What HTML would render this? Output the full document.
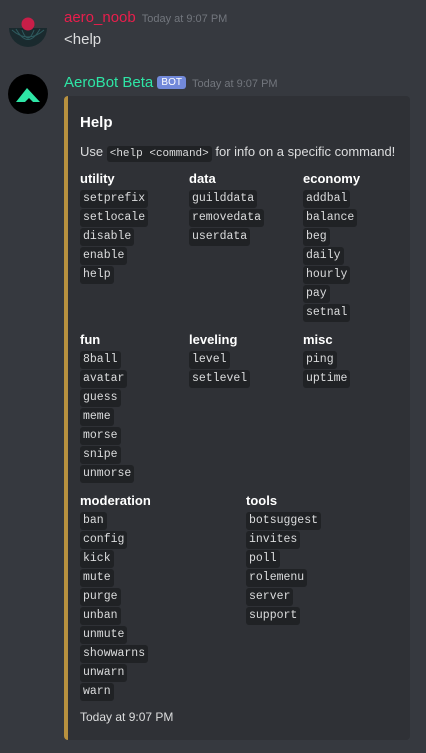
<!DOCTYPE html>
<html><head><meta charset="utf-8"><style>
body{margin:0;width:426px;height:753px;background:#36393f;font-family:"Liberation Sans",sans-serif;position:relative;overflow:hidden}
.a{position:absolute;white-space:nowrap}
.c{position:absolute;font-family:"Liberation Mono",monospace;font-size:11.5px;color:#dcddde;background:#202225;border-radius:3px;padding:0 3px;height:18px;line-height:18px}
.f{position:absolute;font-weight:bold;font-size:13px;color:#fff}
.ts{font-size:11px;color:#72767d;margin-left:6px;font-weight:normal}
</style></head><body>
<svg class="a" style="left:8px;top:10px" width="40" height="40" viewBox="0 0 40 40">
<path d="M1 18 A19 19 0 0 0 39 18 Z" fill="#1a2a2e"/>
<path d="M4 20 Q20 34 36 20 M8 19 Q20 40 32 19 M14 20 Q20 36 26 20" stroke="#2e5a5e" stroke-width="1" fill="none"/>
<circle cx="20" cy="14" r="6.5" fill="#c81e48"/>
</svg>
<div class="a" style="left:64px;top:9px;font-size:15px;color:#e91e4c;font-weight:500">aero_noob<span class="ts">Today at 9:07 PM</span></div>
<div class="a" style="left:64px;top:31px;font-size:15px;color:#dcddde">&lt;help</div>
<svg class="a" style="left:8px;top:74px" width="40" height="40" viewBox="0 0 40 40">
<circle cx="20" cy="20" r="20" fill="#000"/>
<path d="M8 28 L19 14 L32 28 Z M17 28 L21 24 L25 28 Z" fill="#2ee6a6" fill-rule="evenodd"/>
</svg>
<div class="a" style="left:64px;top:74px;font-size:15px;color:#2ee6a6;font-weight:500">AeroBot Beta <span style="background:#7289da;color:#fff;font-size:10px;padding:1px 4px;border-radius:3px;vertical-align:2px">BOT</span><span class="ts">Today at 9:07 PM</span></div>
<div class="a" style="left:64px;top:96px;width:346px;height:644px;background:#2f3136;border-radius:4px;border-left:4px solid #b8913f;box-sizing:border-box"></div>
<div class="a" style="left:80px;top:114px;font-size:15px;font-weight:bold;color:#fff">Help</div>
<div class="a" style="left:80px;top:144px;font-size:13px;color:#dcddde">Use <span style="font-family:'Liberation Mono',monospace;font-size:11px;background:#202225;border-radius:3px;padding:2px 3px">&lt;help &lt;command&gt;</span> for info on a specific command!</div>
<div class="f" style="left:80px;top:171px">utility</div>
<div class="f" style="left:189px;top:171px">data</div>
<div class="f" style="left:303px;top:171px">economy</div>
<div class="c" style="left:80px;top:190px">setprefix</div><div class="c" style="left:80px;top:209px">setlocale</div><div class="c" style="left:80px;top:228px">disable</div><div class="c" style="left:80px;top:247px">enable</div><div class="c" style="left:80px;top:266px">help</div>
<div class="c" style="left:189px;top:190px">guilddata</div><div class="c" style="left:189px;top:209px">removedata</div><div class="c" style="left:189px;top:228px">userdata</div>
<div class="c" style="left:303px;top:190px">addbal</div><div class="c" style="left:303px;top:209px">balance</div><div class="c" style="left:303px;top:228px">beg</div><div class="c" style="left:303px;top:247px">daily</div><div class="c" style="left:303px;top:266px">hourly</div><div class="c" style="left:303px;top:285px">pay</div><div class="c" style="left:303px;top:304px">setnal</div>
<div class="f" style="left:80px;top:332px">fun</div>
<div class="f" style="left:189px;top:332px">leveling</div>
<div class="f" style="left:303px;top:332px">misc</div>
<div class="c" style="left:80px;top:351px">8ball</div><div class="c" style="left:80px;top:370px">avatar</div><div class="c" style="left:80px;top:389px">guess</div><div class="c" style="left:80px;top:408px">meme</div><div class="c" style="left:80px;top:427px">morse</div><div class="c" style="left:80px;top:446px">snipe</div><div class="c" style="left:80px;top:465px">unmorse</div>
<div class="c" style="left:189px;top:351px">level</div><div class="c" style="left:189px;top:370px">setlevel</div>
<div class="c" style="left:303px;top:351px">ping</div><div class="c" style="left:303px;top:370px">uptime</div>
<div class="f" style="left:80px;top:493px">moderation</div>
<div class="f" style="left:246px;top:493px">tools</div>
<div class="c" style="left:80px;top:512px">ban</div><div class="c" style="left:80px;top:531px">config</div><div class="c" style="left:80px;top:550px">kick</div><div class="c" style="left:80px;top:569px">mute</div><div class="c" style="left:80px;top:588px">purge</div><div class="c" style="left:80px;top:607px">unban</div><div class="c" style="left:80px;top:626px">unmute</div><div class="c" style="left:80px;top:645px">showwarns</div><div class="c" style="left:80px;top:664px">unwarn</div><div class="c" style="left:80px;top:683px">warn</div>
<div class="c" style="left:246px;top:512px">botsuggest</div><div class="c" style="left:246px;top:531px">invites</div><div class="c" style="left:246px;top:550px">poll</div><div class="c" style="left:246px;top:569px">rolemenu</div><div class="c" style="left:246px;top:588px">server</div><div class="c" style="left:246px;top:607px">support</div>
<div class="a" style="left:80px;top:710px;font-size:12px;color:#dcddde">Today at 9:07 PM</div>
</body></html>
